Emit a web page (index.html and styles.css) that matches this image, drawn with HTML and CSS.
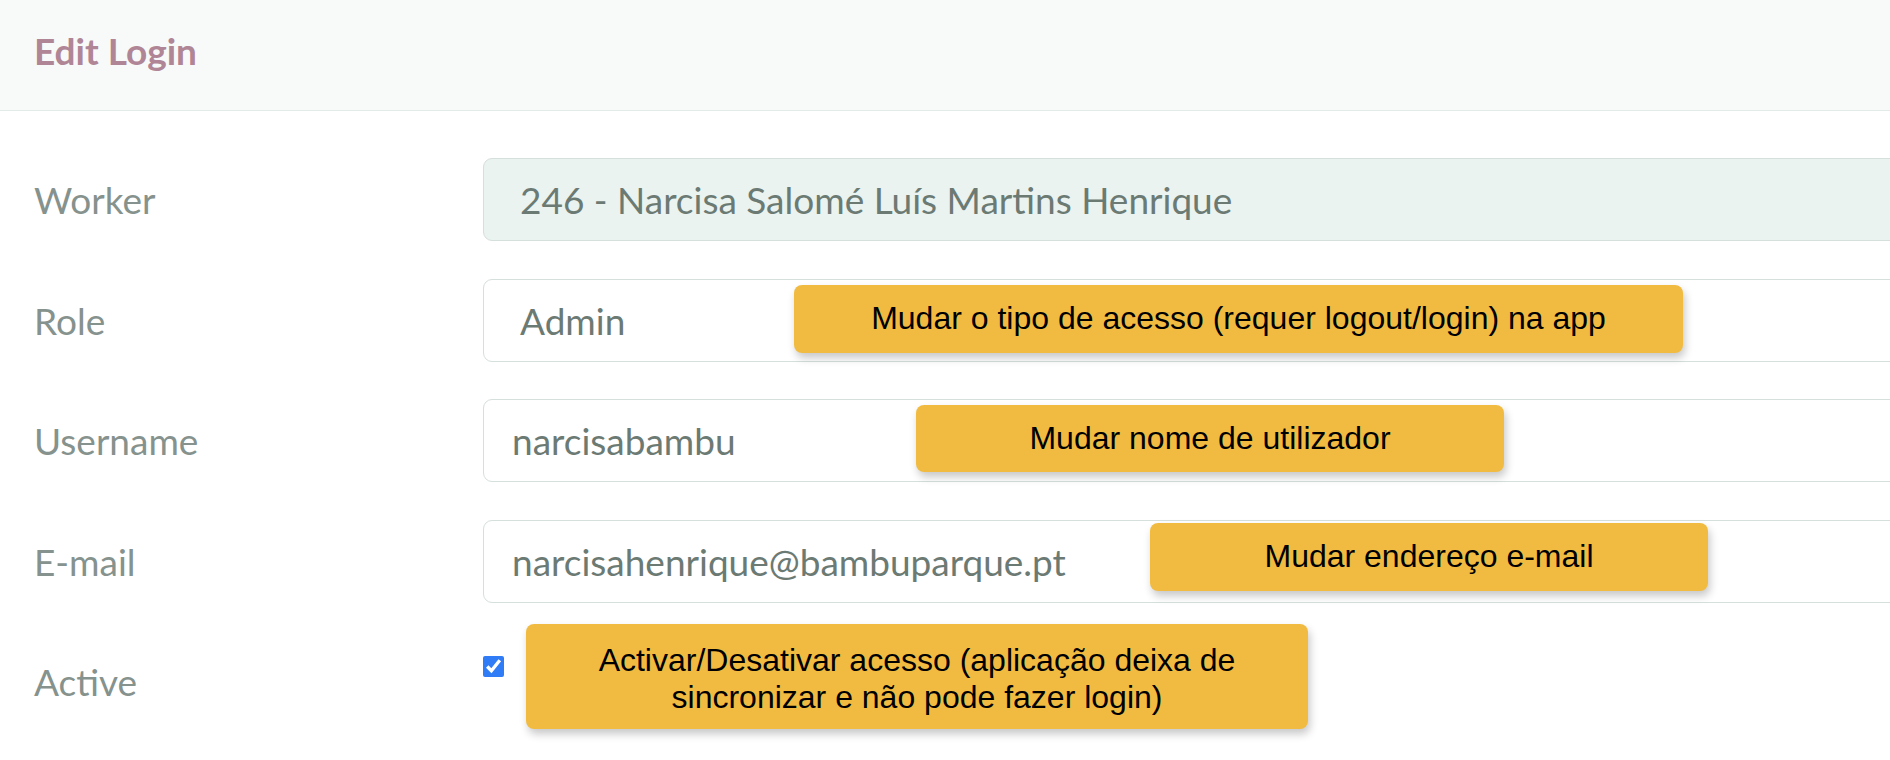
FILE: index.html
```html
<!DOCTYPE html>
<html lang="pt">
<head>
  <meta charset="UTF-8">
  <meta name="viewport" content="width=device-width, initial-scale=1.0">
  <title>Edit Login</title>
  <link rel="stylesheet" href="styles.css">
</head>
<body>
  <div class="card">
    <div class="card-header">
      <h1>Edit Login</h1>
    </div>

    <form class="card-body">
      <div class="form-row">
        <label for="worker">Worker</label>
        <select id="worker" class="field field-select" disabled>
          <option>246 - Narcisa Salomé Luís Martins Henrique</option>
        </select>
      </div>

      <div class="form-row">
        <label for="role">Role</label>
        <select id="role" class="field field-select">
          <option>Admin</option>
        </select>
        <div class="tip tip-role">Mudar o tipo de acesso (requer logout/login) na app</div>
      </div>

      <div class="form-row">
        <label for="username">Username</label>
        <input type="text" id="username" class="field" value="narcisabambu">
        <div class="tip tip-user">Mudar nome de utilizador</div>
      </div>

      <div class="form-row">
        <label for="email">E-mail</label>
        <input type="text" id="email" class="field" value="narcisahenrique@bambuparque.pt">
        <div class="tip tip-email">Mudar endereço e-mail</div>
      </div>

      <div class="form-row">
        <label for="active">Active</label>
        <div class="check-wrap">
          <input type="checkbox" id="active" checked>
        </div>
        <div class="tip tip-active">Activar/Desativar acesso (aplicação deixa de<br>sincronizar e não pode fazer login)</div>
      </div>
    </form>
  </div>
</body>
</html>
```

FILE: styles.css
```css
body {
  margin: 0;
  background-color: #fff;
  font-family: Lato, "Noto Sans", sans-serif;
  overflow: hidden;
}

.card {
  width: 1940px;
  height: 760px;
}

.card-header {
  height: 101px;
  padding-bottom: 9px;
  background-color: #f8faf9;
  border-bottom: 1px solid #e2ebe8;
  display: flex;
  align-items: center;
  padding-left: 34px;
}

.card-header h1 {
  margin: 0;
  font-size: 37px;
  font-weight: 700;
  color: #b08596;
}

.card-body {
  margin: 0;
  padding: 47px 0 0 34px;
  display: flex;
  flex-direction: column;
  gap: 37.5px;
}

.form-row {
  position: relative;
  display: flex;
  align-items: center;
  height: 83px;
}

.form-row label {
  width: 449px;
  flex-shrink: 0;
  font-size: 37px;
  color: #86928d;
}

.field {
  flex: 1;
  height: 83px;
  box-sizing: border-box;
  border: 1px solid #d5dfdb;
  border-radius: 9px;
  background-color: #fff;
  padding: 0 28px;
  font-family: inherit;
  font-size: 37px;
  color: #6c7a74;
  outline: none;
}

.field-select {
  appearance: none;
  -webkit-appearance: none;
  padding-left: 36px;
}

.field-select:disabled {
  background-color: #eaf3ef;
  opacity: 1;
  color: #6c7a74;
}

.check-wrap {
  align-self: flex-start;
  padding-top: 16px;
}

.check-wrap input {
  margin: 0;
  width: 21px;
  height: 21px;
  accent-color: #2f7cf6;
}

/* annotation notes over the form */
.tip {
  position: absolute;
  display: flex;
  align-items: center;
  justify-content: center;
  box-sizing: border-box;
  background-color: #f1bb41;
  border-radius: 8px;
  box-shadow: 2px 5px 9px rgba(0, 0, 0, 0.22);
  font-family: "Liberation Sans", Arial, sans-serif;
  font-size: 32px;
  line-height: 37px;
  color: #000;
  text-align: center;
}

.tip-role {
  left: 760px;
  top: 6px;
  width: 889px;
  height: 68px;
}

.tip-user {
  left: 882px;
  top: 6px;
  width: 588px;
  height: 67px;
}

.tip-email {
  left: 1116px;
  top: 3px;
  width: 558px;
  height: 68px;
}

.tip-active {
  left: 492px;
  top: -16px;
  width: 782px;
  height: 105px;
  padding-top: 4px;
}
```
